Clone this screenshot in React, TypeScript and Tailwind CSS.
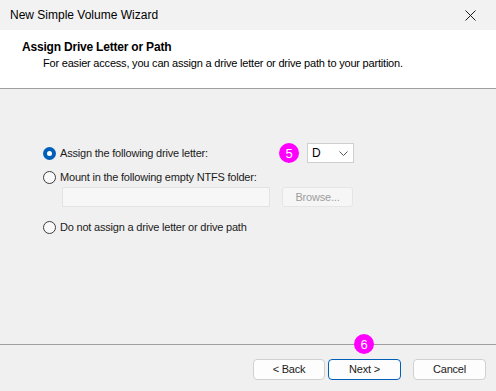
import React from 'react';

const font = "font-['Segoe_UI','Liberation_Sans',Arial,sans-serif]";

function Radio({ checked }: { checked?: boolean }) {
  if (checked) {
    return (
      <span className="flex h-[13px] w-[13px] shrink-0 items-center justify-center rounded-full bg-[#005fb8]">
        <span className="h-[5px] w-[5px] rounded-full bg-white" />
      </span>
    );
  }
  return <span className="h-[13px] w-[13px] shrink-0 rounded-full border border-[#3c3c3c] bg-[#f9f9f9]" />;
}

function Badge({ n }: { n: number }) {
  return (
    <span className="flex h-[20px] w-[20px] shrink-0 items-center justify-center rounded-full bg-[#ff00ff] text-[13px] leading-none text-white">
      {n}
    </span>
  );
}

export default function App() {
  return (
    <div className={`${font} relative flex h-[391px] w-[496px] flex-col overflow-hidden bg-[#f0f0f0] text-[11px] tracking-[-0.2px] text-[#1b1b1b]`}>
      {/* Title bar */}
      <div className="flex h-[30px] items-center justify-between bg-[#f2f2f2] pl-[10px] pr-[20px]">
        <span className="text-[12px] tracking-normal text-black">New Simple Volume Wizard</span>
        <svg width="11" height="11" viewBox="0 0 11 11" className="text-[#1b1b1b]">
          <path d="M0.5 0.5 L10.5 10.5 M10.5 0.5 L0.5 10.5" stroke="currentColor" strokeWidth="1" fill="none" />
        </svg>
      </div>

      {/* Header */}
      <div className="h-[59px] border-b border-[#a0a0a0] bg-white pt-[9px]">
        <div className="pl-[22px] text-[12px] font-bold leading-[16px] tracking-[-0.2px] text-black">Assign Drive Letter or Path</div>
        <div className="pl-[43px] leading-[16px] text-black">
          For easier access, you can assign a drive letter or drive path to your partition.
        </div>
      </div>

      {/* Body */}
      <div className="flex flex-1 flex-col pl-[43px] pt-[54px]">
        <div className="flex h-[20px] items-center">
          <label className="flex w-[236px] items-center gap-[4px]">
            <Radio checked />
            <span>Assign the following drive letter:</span>
          </label>
          <Badge n={5} />
          <div className="ml-[8px] flex h-[20px] w-[47px] items-center justify-between border border-[#cfcfcf] bg-white pl-[4px] pr-[5px]">
            <span className="text-[12px] text-black">D</span>
            <svg width="9" height="5" viewBox="0 0 9 5">
              <path d="M0.5 0.5 L4.5 4.5 L8.5 0.5" stroke="#555" strokeWidth="1" fill="none" />
            </svg>
          </div>
        </div>

        <label className="mt-[4px] flex h-[20px] items-center gap-[4px]">
          <Radio />
          <span>Mount in the following empty NTFS folder:</span>
        </label>

        <div className="flex h-[20px] items-center pl-[19px]">
          <div className="h-[20px] w-[208px] border border-[#e3e3e3] bg-[#f7f7f7]" />
          <button className="ml-[12px] h-[20px] w-[71px] rounded-[3px] border border-[#e5e5e5] bg-[#f6f6f6] text-[11px] text-[#9d9d9d]">
            Browse...
          </button>
        </div>

        <label className="mt-[10px] flex h-[20px] items-center gap-[4px]">
          <Radio />
          <span>Do not assign a drive letter or drive path</span>
        </label>
      </div>

      {/* Footer */}
      <div className="relative h-[47px] border-t border-[#a0a0a0]">
        <div className="flex pl-[253px] pt-[14px]">
          <button className="h-[21px] w-[72px] rounded-[4px] border border-[#d0d0d0] bg-[#fdfdfd] text-[11px]">&lt; Back</button>
          <button className="ml-[3px] h-[21px] w-[73px] rounded-[4px] border border-[#005fb8] bg-[#fdfdfd] text-[11px]">Next &gt;</button>
          <button className="ml-[12px] h-[21px] w-[73px] rounded-[4px] border border-[#d0d0d0] bg-[#fdfdfd] text-[11px]">Cancel</button>
        </div>
        <div className="absolute left-[354px] top-[-11px]">
          <Badge n={6} />
        </div>
      </div>
    </div>
  );
}
